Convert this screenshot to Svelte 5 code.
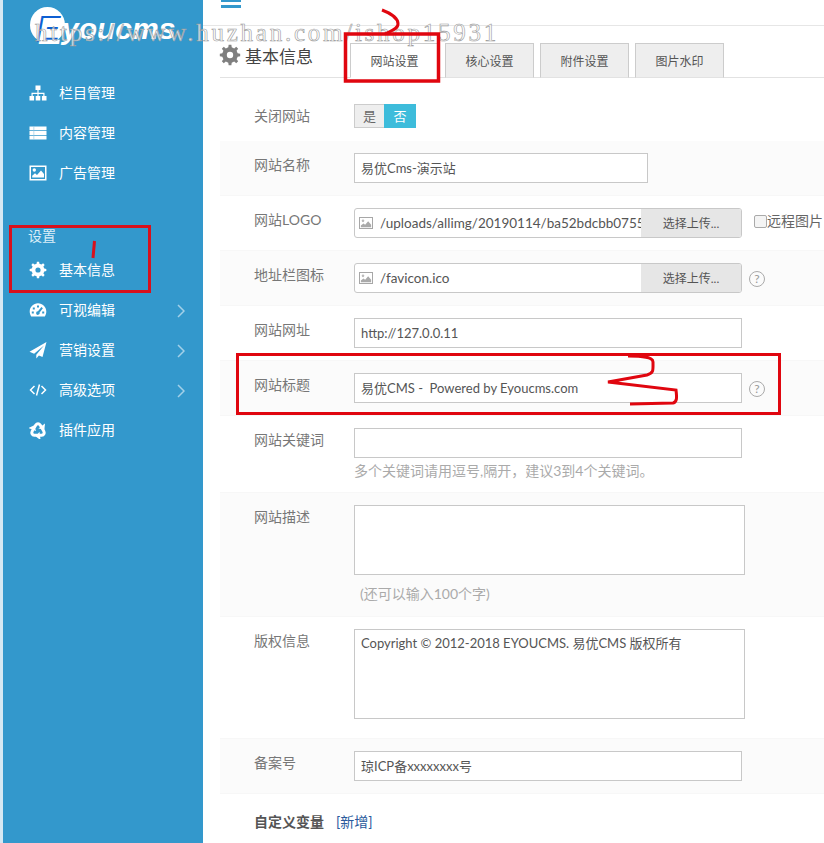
<script>
	// gear outline with n teeth, used for the cog icons
	const gear = (cx, cy, r1, r2, hole, n = 8) => {
		let d = ''
		const step = (Math.PI * 2) / n
		for (let i = 0; i < n; i++) {
			const a = i * step - Math.PI / 2
			const pts = [
				[a - step * 0.28, r1],
				[a - step * 0.17, r2],
				[a + step * 0.17, r2],
				[a + step * 0.28, r1]
			]
			for (const [t, r] of pts) {
				d += (d ? 'L' : 'M') + (cx + Math.cos(t) * r).toFixed(2) + ' ' + (cy + Math.sin(t) * r).toFixed(2)
			}
		}
		d += `Z M${cx - hole} ${cy} a${hole} ${hole} 0 1 0 ${hole * 2} 0 a${hole} ${hole} 0 1 0 ${-hole * 2} 0Z`
		return d
	}

	const cog = gear(9, 9, 6.4, 8.4, 2.6)

	const topItems = [
		{ icon: 'sitemap', text: '栏目管理' },
		{ icon: 'list', text: '内容管理' },
		{ icon: 'picture', text: '广告管理' }
	]
	const setItems = [
		{ icon: 'cog', text: '基本信息' },
		{ icon: 'dash', text: '可视编辑', more: true },
		{ icon: 'plane', text: '营销设置', more: true },
		{ icon: 'code', text: '高级选项', more: true },
		{ icon: 'recycle', text: '插件应用' }
	]
	const tabs = ['网站设置', '核心设置', '附件设置', '图片水印']
</script>

{#snippet icon(name)}
	<svg class="ico" viewBox="0 0 18 18" fill="currentColor">
		{#if name === 'sitemap'}
			<path d="M6.5 1.5h5v4.5h-5zM0.5 12h4.6v4.6H0.5zM6.7 12h4.6v4.6H6.7zM12.9 12h4.6v4.6h-4.6z" />
			<path d="M8.4 6h1.2v2.8h5.9V12h-1.2V10H9.6v2H8.4v-2H3.7v2H2.5V8.800h5.900z" />
		{:else if name === 'list'}
			<path d="M0.500 2.500h17v3.800h-17zM0.500 7.100h17v3.800h-17zM0.500 11.700h17v3.800h-17z" />
			<path d="M4.600 2.500h.6v13h-.6z" fill="#8cc4e2" />
		{:else if name === 'picture'}
			<path fill-rule="evenodd" d="M0.500 1.500h17v15h-17zM2 3v12h14V3z" />
			<circle cx="5.300" cy="6" r="1.700" />
			<path d="M3.200 13.600v-1.800l2.800-2.600 2 1.800 4-4.400 3 3.400v3.600z" />
		{:else if name === 'cog'}
			<path fill-rule="evenodd" d={cog} />
		{:else if name === 'dash'}
			<path fill-rule="evenodd" d="M9 2.300C4.400 2.300.700 6 .700 10.600c0 1.800.5 3.400 1.500 4.900h13.600c1-1.500 1.500-3.100 1.500-4.900C17.300 6 13.600 2.300 9 2.300zM8 4.400h2v2H8zM3.800 6.400h2v2h-2zM2.800 10.600h2v2h-2zM13.200 10.600h2v2h-2zM12.400 6l1.500 1.200-3.300 4.300a1.800 1.800 0 1 1-1.600-1.200z" />
		{:else if name === 'plane'}
			<path d="M17.500 1 .5 10.800l4.600 1.900L15 4.500 7.300 13.800v3.600l2.600-3 3.600 1.500z" />
		{:else if name === 'code'}
			<path d="M5.500 5 1.500 9l4 4M12.500 5l4 4-4 4M10.500 3.500l-3 11" fill="none" stroke="currentColor" stroke-width="1.500" />
		{:else if name === 'recycle'}
			{#each [0, 120, 240] as turn}
				<g transform="rotate({turn} 9 9.500)">
					<path d="M4.300 8.200 6.800 4C8 2.300 10 2.300 11.200 4l1.300 2.200" fill="none" stroke="currentColor" stroke-width="3" />
					<path d="M9.400 7.600l6 .8 .6-6z" />
				</g>
			{/each}
		{/if}
	</svg>
{/snippet}

{#snippet navItem(item)}
	<a class="nav-item">
		{@render icon(item.icon)}
		<span class="nav-text">{item.text}</span>
		{#if item.more}
			<svg class="chev" viewBox="0 0 8 14"><path d="M1 1l6 6-6 6" fill="none" stroke="currentColor" stroke-width="1.500" /></svg>
		{/if}
	</a>
{/snippet}

{#snippet photo()}
	<svg class="pic" viewBox="0 0 16 14">
		<rect x=".5" y=".5" width="15" height="13" fill="#fff" stroke="#999" />
		<circle cx="4.500" cy="4.500" r="1.500" fill="#bbb" />
		<path d="M2 12V10l3-2.500 2 1.500 3.500-4L14 9v3z" fill="#aaa" />
	</svg>
{/snippet}

{#snippet help()}
	<span class="help">?</span>
{/snippet}

<div class="page">
	<aside class="sidebar">
		<div class="logo">
			<span class="logo-mark"><b>E</b></span>
			<span class="logo-text">youcms</span>
		</div>
		{#each topItems as item}
			{@render navItem(item)}
		{/each}
		<div class="nav-group">设置</div>
		{#each setItems as item}
			{@render navItem(item)}
		{/each}
	</aside>

	<main class="main">
		<header class="topbar">
			<div class="burger"></div>
		</header>

		<div class="tabbar">
			<div class="title">
				<svg class="title-ico" viewBox="0 0 18 18" fill="#7f7f7f"><path fill-rule="evenodd" d={cog} /></svg>
				<span>基本信息</span>
			</div>
			<div class="tabs">
				{#each tabs as tab, i}
					<div class="tab" class:active={i === 0}>{tab}</div>
				{/each}
			</div>
		</div>

		<div class="row first">
			<label>关闭网站</label>
			<div class="toggle"><span class="off">是</span><span class="on">否</span></div>
		</div>

		<div class="row gray">
			<label>网站名称</label>
			<div class="input short">易优Cms-演示站</div>
		</div>

		<div class="row">
			<label>网站LOGO</label>
			<div class="line">
				<div class="upload">
					{@render photo()}
					<span class="path">/uploads/allimg/20190114/ba52bdcbb07553098</span>
					<span class="pick">选择上传...</span>
				</div>
				<span class="remote"><i class="check"></i>远程图片</span>
			</div>
		</div>

		<div class="row gray">
			<label>地址栏图标</label>
			<div class="line">
				<div class="upload">
					{@render photo()}
					<span class="path">/favicon.ico</span>
					<span class="pick">选择上传...</span>
				</div>
				{@render help()}
			</div>
		</div>

		<div class="row">
			<label>网站网址</label>
			<div class="input wide">http://127.0.0.11</div>
		</div>

		<div class="row gray">
			<label>网站标题</label>
			<div class="line">
				<div class="input wide">易优CMS -&nbsp; Powered by Eyoucms.com</div>
				{@render help()}
			</div>
		</div>

		<div class="row tall-hint">
			<label>网站关键词</label>
			<div>
				<div class="input wide"></div>
				<p class="hint">多个关键词请用逗号,隔开，建议3到4个关键词。</p>
			</div>
		</div>

		<div class="row gray desc">
			<label>网站描述</label>
			<div>
				<div class="area small"></div>
				<p class="hint">(还可以输入100个字)</p>
			</div>
		</div>

		<div class="row copy">
			<label>版权信息</label>
			<div class="area big">Copyright © 2012-2018 EYOUCMS. 易优CMS 版权所有</div>
		</div>

		<div class="row gray">
			<label>备案号</label>
			<div class="input wide">琼ICP备xxxxxxxx号</div>
		</div>

		<div class="custom"><b>自定义变量</b><a>[新增]</a></div>
	</main>

	<!-- watermark and hand drawn marks lying over the shot -->
	<div class="watermark">https://www.huzhan.com/ishop15931</div>
	<svg class="marks" viewBox="0 0 824 843" fill="none" stroke="#e0060f">
		<rect x="10.500" y="226.500" width="139" height="65" stroke-width="3" stroke="#d8101c" />
		<rect x="345.500" y="34" width="93" height="47" stroke-width="3.500" />
		<rect x="237.500" y="354.500" width="542" height="59" stroke-width="3" />
		<path d="M94.500 241l-1.500 17" stroke-width="3" stroke="#d8101c" />
		<path d="M382 10c8 3 16 8 16 14 0 5-7 7-13 10" stroke-width="3" />
		<path d="M628 356c10 0 25 0 25 6 0 8 1 11-6 13l-39 7 68 8c1 8 1 12-3 13l-43 1" stroke-width="3" />
	</svg>
</div>

<style>
	:global(body) {
		margin: 0;
		background: #fff;
	}

	.page {
		position: relative;
		display: flex;
		width: 824px;
		height: 843px;
		overflow: hidden;
		font-family: "Lato", "Noto Sans CJK SC", sans-serif;
		font-size: 13px;
		color: #555;
	}

	.sidebar {
		flex: none;
		width: 200px;
		margin-left: 3px;
		background: #3398cc;
		box-shadow: -3px 0 0 #d5e8f3;
		color: #fff;
		font-size: 14px;
	}

	.logo {
		position: relative;
		height: 73px;
	}
	.logo-mark {
		position: absolute;
		left: 27px;
		top: 7px;
		width: 35px;
		height: 36px;
		border-radius: 50%;
		background: #fff;
	}
	.logo-mark b {
		position: absolute;
		left: 8px;
		top: 5px;
		font: italic bold 36px/40px "Liberation Sans", sans-serif;
		color: #fff;
		text-shadow: -2px -2px 0 #0d5fd2;
	}
	.logo-text {
		position: absolute;
		left: 59px;
		top: 9px;
		font: italic bold 30px/40px "Liberation Sans", sans-serif;
		color: #fff;
	}

	.nav-item {
		display: flex;
		align-items: center;
		height: 40px;
		padding-left: 26px;
	}
	.ico {
		width: 18px;
		height: 18px;
		flex: none;
	}
	.nav-text {
		margin-left: 12px;
		line-height: 20px;
		flex: 1;
	}
	.chev {
		width: 8px;
		height: 14px;
		margin: 2px 18px 0 0;
		color: rgba(255, 255, 255, 0.55);
	}
	.nav-group {
		margin: 31px 0 2px;
		padding-left: 25px;
		line-height: 24px;
		font-size: 14px;
		color: #d9edf7;
	}

	.main {
		flex: 1;
		min-width: 0;
	}

	.topbar {
		display: flow-root;
		height: 25px;
		border-bottom: 1px solid #e6e6e6;
		padding-left: 18px;
	}
	.burger {
		width: 20px;
		height: 3px;
		border-top: 2px solid #3398cc;
		border-bottom: 3px solid #3398cc;
	}

	.tabbar {
		display: flex;
		align-items: flex-end;
		height: 51px;
		margin: 0 0 0 17px;
		border-bottom: 1px solid #e2e2e2;
	}
	.title {
		display: flex;
		align-items: center;
		width: 130px;
		height: 42px;
		margin-bottom: 1px;
		font-size: 17px;
		color: #444;
	}
	.title-ico {
		width: 22px;
		height: 22px;
		margin: 0 4px 0 -1px;
	}
	.tabs {
		display: flex;
		gap: 6px;
		margin-bottom: -1px;
	}
	.tab {
		width: 89px;
		height: 35px;
		box-sizing: border-box;
		border: 1px solid #ccc;
		border-bottom-color: #e2e2e2;
		background: #eee;
		text-align: center;
		line-height: 35px;
		font-size: 12px;
		color: #555;
	}
	.tab.active {
		background: #fff;
		border-bottom-color: #fff;
	}

	.row {
		display: grid;
		grid-template-columns: 100px 1fr;
		box-sizing: border-box;
		height: 55px;
		margin-left: 17px;
		padding: 12px 0 0 34px;
		border-bottom: 1px solid #f7f7f7;
	}
	.row.gray {
		background: #fbfbfb;
	}
	.row.first {
		height: 63px;
		padding-top: 26px;
		border-bottom: 0;
	}
	.row.tall-hint {
		height: 77px;
	}
	.row.desc {
		height: 124px;
	}
	.row.copy {
		height: 122px;
	}
	label {
		font-size: 14px;
		line-height: 24px;
		color: #777;
	}

	.toggle {
		display: flex;
		height: 24px;
		line-height: 24px;
		font-size: 13px;
		text-align: center;
	}
	.toggle .off {
		width: 30px;
		background: #eee;
		box-sizing: border-box;
		border: 1px solid #ccc;
		border-right: 0;
		line-height: 22px;
		color: #666;
	}
	.toggle .on {
		width: 32px;
		background: #3dbcdb;
		color: #fff;
	}

	.input,
	.area,
	.upload {
		box-sizing: border-box;
		border: 1px solid #c8c8c8;
		background: #fff;
		font-size: 13px;
		color: #555;
	}
	.input {
		height: 30px;
		padding: 0 6px;
		line-height: 28px;
		white-space: pre;
	}
	.input.short {
		width: 294px;
	}
	.input.wide {
		width: 388px;
	}

	.line {
		display: flex;
		align-items: flex-start;
		white-space: nowrap;
	}
	.upload {
		display: flex;
		align-items: center;
		width: 388px;
		height: 30px;
		flex: none;
		border-radius: 3px;
		overflow: hidden;
	}
	.pic {
		width: 14px;
		height: 12px;
		margin: 0 7px 0 4px;
		flex: none;
	}
	.path {
		width: 261px;
		flex: none;
		overflow: hidden;
		white-space: nowrap;
		font-size: 13.5px;
	}
	.pick {
		flex: 1;
		align-self: stretch;
		background: #e6e6e6;
		text-align: center;
		line-height: 30px;
		font-size: 12px;
	}
	.remote {
		display: flex;
		align-items: center;
		margin: 3px 0 0 12px;
		font-size: 14px;
		line-height: 20px;
		color: #666;
	}
	.check {
		width: 11px;
		height: 11px;
		border: 1px solid #aaa;
		border-radius: 2px;
		background: #f4f4f4;
	}
	.help {
		width: 14px;
		height: 14px;
		margin: 8px 0 0 7px;
		border: 1px solid #aaa;
		border-radius: 50%;
		text-align: center;
		line-height: 14px;
		font-size: 12px;
		color: #999;
	}

	.hint {
		margin: 3px 0 0;
		line-height: 20px;
		font-size: 14px;
		color: #aaa;
	}
	.desc .hint {
		margin: 9px 0 0 6px;
	}
	.area {
		width: 391px;
		padding: 3px 6px;
		line-height: 20px;
		white-space: pre;
	}
	.area.small {
		height: 70px;
	}
	.area.big {
		height: 90px;
	}

	.custom {
		margin: 18px 0 0 51px;
		font-size: 14px;
		line-height: 20px;
		color: #555;
	}
	.custom a {
		margin-left: 12px;
		color: #2a5a9c;
	}

	.watermark {
		position: absolute;
		left: 35px;
		top: 18px;
		font: 25px/30px "Liberation Serif", serif;
		letter-spacing: 2.750px;
		white-space: nowrap;
		color: rgba(255, 255, 255, 0.7);
		-webkit-text-stroke: 0.6px #9a9a9a;
		pointer-events: none;
	}
	.marks {
		position: absolute;
		inset: 0;
		width: 824px;
		height: 843px;
		pointer-events: none;
	}
</style>
